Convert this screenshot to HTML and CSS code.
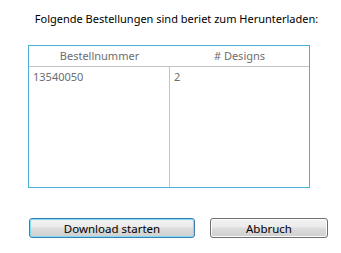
FILE: index.html
```html
<!DOCTYPE html>
<html lang="de">
<head>
    <meta charset="UTF-8">
    <meta name="viewport" content="width=device-width, initial-scale=1.0">
    <title>Download</title>
    <link rel="stylesheet" href="styles.css">
</head>
<body>
    <div class="dialog">
        <p class="intro">Folgende Bestellungen sind beriet zum Herunterladen:</p>
        <div class="orders">
            <div class="orders-head">
                <div class="col col-nr">Bestellnummer</div>
                <div class="col col-designs"># Designs</div>
            </div>
            <div class="orders-body">
                <div class="col col-nr">13540050</div>
                <div class="col col-designs">2</div>
            </div>
        </div>
        <div class="actions">
            <button class="btn btn-default">Download starten</button>
            <button class="btn btn-cancel">Abbruch</button>
        </div>
    </div>
</body>
</html>
```

FILE: styles.css
```css
body {
    margin: 0;
    background-color: #ffffff;
    font-family: "Noto Sans", "DejaVu Sans", sans-serif;
    font-size: 11px;
    color: #000000;
}
.dialog {
    width: 341px;
    height: 253px;
    padding-top: 10px;
    box-sizing: border-box;
}
.intro {
    margin: 0;
    height: 18px;
    line-height: 18px;
    text-align: center;
    padding-left: 12px;
}
.orders {
    margin: 17px 0 0 28px;
    width: 282px;
    height: 143px;
    box-sizing: border-box;
    border: 1px solid #4ab1d6;
    display: flex;
    flex-direction: column;
    color: #6d6d6d;
}
.orders-head {
    display: flex;
    height: 20px;
    line-height: 19px;
    border-bottom: 1px solid #c4c4c4;
}
.orders-head .col {
    text-align: center;
}
.orders-body {
    display: flex;
    flex: 1;
    line-height: 20px;
}
.col-nr {
    width: 141px;
    padding-left: 4px;
}
.orders-head .col-nr {
    padding-left: 0;
}
.orders-body .col-nr {
    box-sizing: border-box;
    width: 141px;
    border-right: 1px solid #c4c4c4;
}
.col-designs {
    flex: 1;
    padding-left: 4px;
}
.orders-head .col-designs {
    padding-left: 0;
}
.actions {
    display: flex;
    margin: 30px 0 0 29px;
    gap: 15px;
}
.btn {
    height: 20px;
    padding: 0;
    box-sizing: border-box;
    font-family: inherit;
    font-size: 11.5px;
    line-height: 17px;
    color: #000000;
    border-radius: 3px;
    background: linear-gradient(#f2f2f2 0%, #ebebeb 45%, #dddddd 50%, #cfcfcf 100%);
}
.btn-default {
    width: 166px;
    border: 1px solid #3c7fb1;
    box-shadow: inset 0 0 0 1px #7fdcf7;
}
.btn-cancel {
    width: 118px;
    border: 1px solid #707070;
    box-shadow: inset 0 0 0 1px #fcfcfc;
}
```
